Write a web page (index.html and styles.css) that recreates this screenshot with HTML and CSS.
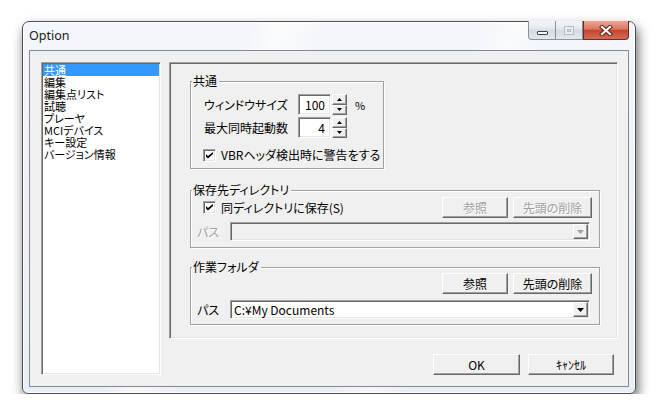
FILE: index.html
```html
<!DOCTYPE html>
<html lang="ja">
<head>
    <meta charset="UTF-8">
    <title>Option</title>
    <link rel="stylesheet" href="styles.css">
</head>
<body>
    <div class="window">
        <div class="titlebar">
            <span class="title">Option</span>
            <div class="caps">
                <span class="cap cap-min"><i></i></span>
                <span class="cap cap-max"><i></i></span>
                <span class="cap cap-close">
                    <svg width="14" height="11" viewBox="0 0 14 11">
                        <path d="M3 2 L11 9 M11 2 L3 9" stroke="#5a2218" stroke-width="4.2" stroke-linecap="square"/>
                        <path d="M3 2 L11 9 M11 2 L3 9" stroke="#fff" stroke-width="2.2" stroke-linecap="square"/>
                    </svg>
                </span>
            </div>
        </div>

        <div class="client">
            <ul class="listbox">
                <li class="selected">共通</li>
                <li>編集</li>
                <li>編集点リスト</li>
                <li>試聴</li>
                <li>プレーヤ</li>
                <li>MCIデバイス</li>
                <li>キー設定</li>
                <li>バージョン情報</li>
            </ul>

            <div class="main">
                <div class="panel">
                    <!-- 共通 -->
                    <div class="group group-common">
                        <span class="group-label">共通</span>
                        <div class="spin-row">
                            <span class="spin-label">ウィンドウサイズ</span>
                            <span class="edit">100</span>
                            <span class="spin">
                                <span class="spin-btn"><svg width="5" height="3" viewBox="0 0 5 3"><polygon points="0,3 2.5,0 5,3" fill="#000"/></svg></span>
                                <span class="spin-btn"><svg width="5" height="3" viewBox="0 0 5 3"><polygon points="0,0 5,0 2.5,3" fill="#000"/></svg></span>
                            </span>
                            <span class="unit">%</span>
                        </div>
                        <div class="spin-row">
                            <span class="spin-label">最大同時起動数</span>
                            <span class="edit">4</span>
                            <span class="spin">
                                <span class="spin-btn"><svg width="5" height="3" viewBox="0 0 5 3"><polygon points="0,3 2.5,0 5,3" fill="#000"/></svg></span>
                                <span class="spin-btn"><svg width="5" height="3" viewBox="0 0 5 3"><polygon points="0,0 5,0 2.5,3" fill="#000"/></svg></span>
                            </span>
                        </div>
                        <label class="check-row check-vbr">
                            <span class="checkbox"><svg width="7" height="7" viewBox="0 0 7 7"><path d="M0 2 L2 4 L7 0 L7 2 L2 6.5 L0 4.5 Z" fill="#000"/></svg></span>
                            VBRヘッダ検出時に警告をする
                        </label>
                    </div>

                    <!-- 保存先ディレクトリ -->
                    <div class="group group-save">
                        <span class="group-label">保存先ディレクトリ</span>
                        <div class="top-row">
                            <label class="check-row">
                                <span class="checkbox"><svg width="7" height="7" viewBox="0 0 7 7"><path d="M0 2 L2 4 L7 0 L7 2 L2 6.5 L0 4.5 Z" fill="#000"/></svg></span>
                                同ディレクトリに保存(S)
                            </label>
                            <div class="btn-pair">
                                <button class="btn btn-ref" disabled>参照</button>
                                <button class="btn btn-del" disabled>先頭の削除</button>
                            </div>
                        </div>
                        <div class="path-row">
                            <span class="path-label disabled">パス</span>
                            <span class="combo combo-disabled">
                                <span class="combo-text"></span>
                                <span class="combo-arrow"><svg width="7" height="4" viewBox="0 0 7 4"><polygon points="0,0 7,0 3.5,4" fill="#a0a0a0"/></svg></span>
                            </span>
                        </div>
                    </div>

                    <!-- 作業フォルダ -->
                    <div class="group group-work">
                        <span class="group-label">作業フォルダ</span>
                        <div class="top-row top-row-end">
                            <div class="btn-pair">
                                <button class="btn btn-ref">参照</button>
                                <button class="btn btn-del">先頭の削除</button>
                            </div>
                        </div>
                        <div class="path-row path-row-work">
                            <span class="path-label">パス</span>
                            <span class="combo">
                                <span class="combo-text">C:¥My Documents</span>
                                <span class="combo-arrow"><svg width="7" height="4" viewBox="0 0 7 4"><polygon points="0,0 7,0 3.5,4" fill="#000"/></svg></span>
                            </span>
                        </div>
                    </div>
                </div>

                <div class="footer">
                    <button class="btn btn-ok">OK</button>
                    <button class="btn btn-cancel">ｷｬﾝｾﾙ</button>
                </div>
            </div>
        </div>
    </div>
</body>
</html>
```

FILE: styles.css
```css
* {
    margin: 0;
    padding: 0;
    box-sizing: border-box;
}

body {
    background: #fff;
    font-family: "Noto Sans CJK JP", sans-serif;
    font-size: 12px;
    font-feature-settings: "palt";
    color: #000;
}

.window {
    width: 614px;
    height: 373px;
    margin: 21px 0 0 22px;
    padding: 0 6px 6px;
    display: flex;
    flex-direction: column;
    border: 1px solid #4b4f55;
    border-radius: 7px 7px 6px 6px;
    background:
        linear-gradient(112deg, rgba(255,255,255,0) 30%, rgba(255,255,255,0.6) 34%, rgba(255,255,255,0) 40%, rgba(255,255,255,0) 60%, rgba(255,255,255,0.5) 65%, rgba(255,255,255,0) 70%),
        linear-gradient(180deg, #f3f6fa 0%, #e9eef5 100%);
    box-shadow: inset 0 0 0 1px rgba(255,255,255,0.85), 2px 6px 12px rgba(0,0,0,0.6);
}

/* title bar */
.titlebar {
    height: 28px;
    display: flex;
    justify-content: space-between;
    align-items: flex-start;
}

.title {
    font-family: "Noto Sans", sans-serif;
    font-feature-settings: normal;
    font-size: 12.5px;
    line-height: 14px;
    margin-top: 7px;
    color: #1b1b1b;
}

.caps {
    display: flex;
    height: 19px;
    margin-top: -1px;
}

.cap {
    height: 19px;
    display: flex;
    justify-content: center;
    align-items: center;
    border: 1px solid #8a9099;
    border-top: none;
    background: linear-gradient(#f4f6f9 0%, #e3e7ec 45%, #d4d9e0 50%, #e4e8ed 100%);
}

.cap-min {
    width: 27px;
    border-right: none;
    border-radius: 0 0 0 4px;
}

.cap-min i {
    display: block;
    width: 11px;
    height: 4px;
    margin-top: 5px;
    border: 1px solid #3c424c;
    border-radius: 1px;
    background: #fff;
}

.cap-max {
    width: 28px;
}

.cap-max i {
    display: block;
    width: 10px;
    height: 9px;
    border: 1px solid #b9bdc3;
    box-shadow: inset 0 0 0 2px #e8ebef, inset 0 0 0 3px #b9bdc3;
}

.cap-close {
    width: 46px;
    border-color: #6e2a1f;
    border-radius: 0 0 4px 0;
    background: linear-gradient(#eba696 0%, #d87966 45%, #c6452d 52%, #d56c55 100%);
}

/* client area */
.client {
    flex: 1;
    display: flex;
    gap: 8px;
    padding: 11px 10px 11px 11px;
    border: 1px solid #868a90;
    background: #f0f0f0;
}

.listbox {
    width: 120px;
    list-style: none;
    padding: 1px;
    background: #fff;
    border: 1px solid;
    border-color: #a0a0a0 #fff #fff #a0a0a0;
    box-shadow: inset 1px 1px 0 #696969, inset -1px -1px 0 #e3e3e3;
}

.listbox li {
    height: 12px;
    line-height: 12px;
    font-size: 11px;
    padding-left: 1px;
    white-space: nowrap;
}

.listbox li.selected {
    background: #3399ff;
    color: #fff;
}

.main {
    flex: 1;
    display: flex;
    flex-direction: column;
}

.panel {
    height: 277px;
    padding: 18px 0 0 20px;
    border: 1px solid;
    border-color: #a0a0a0 #fff #fff #a0a0a0;
    box-shadow: inset 1px 1px 0 #696969, inset -1px -1px 0 #e3e3e3;
}

/* group boxes */
.group {
    position: relative;
    border: 1px solid #a0a0a0;
    box-shadow: inset 1px 1px 0 #fff, 1px 1px 0 #fff;
}

.group-label {
    position: absolute;
    top: -7px;
    left: 1px;
    padding: 0 2px 0 1px;
    line-height: 12px;
    background: #f0f0f0;
    white-space: nowrap;
}

.group-common {
    width: 194px;
    height: 88px;
    padding: 12px 0 0 13px;
}

.group-save {
    width: 410px;
    height: 58px;
    margin-top: 21px;
    padding: 6px 7px 0 6px;
}

.group-work {
    width: 410px;
    height: 58px;
    margin-top: 19px;
    padding: 5px 7px 0 6px;
}

.spin-row {
    display: flex;
    align-items: center;
    height: 21px;
}

.spin-row + .spin-row {
    margin-top: 2px;
}

.spin-label {
    width: 94px;
    line-height: 12px;
    white-space: nowrap;
}

.edit {
    width: 33px;
    height: 21px;
    padding-right: 5px;
    text-align: right;
    line-height: 19px;
    background: #fff;
    border: 1px solid;
    border-color: #a0a0a0 #fff #fff #a0a0a0;
    box-shadow: inset 1px 1px 0 #696969, inset -1px -1px 0 #e3e3e3;
}

.spin {
    width: 15px;
    height: 21px;
    margin-left: 1px;
    display: flex;
    flex-direction: column;
}

.spin-btn {
    flex: 1;
    display: flex;
    justify-content: center;
    align-items: center;
    background: #f0f0f0;
    border: 1px solid;
    border-color: #fff #696969 #696969 #fff;
    box-shadow: inset -1px -1px 0 #a0a0a0;
}

.unit {
    margin-left: 8px;
    font-size: 11px;
    line-height: 12px;
}

.check-row {
    display: flex;
    align-items: center;
    gap: 5px;
    height: 14px;
    line-height: 12px;
    white-space: nowrap;
}

.check-vbr {
    margin: 10px 0 0 -1px;
}

.checkbox {
    width: 13px;
    height: 13px;
    display: flex;
    justify-content: center;
    align-items: center;
    background: #fff;
    border: 1px solid;
    border-color: #a0a0a0 #fff #fff #a0a0a0;
    box-shadow: inset 1px 1px 0 #696969, inset -1px -1px 0 #e3e3e3;
}

.top-row {
    display: flex;
    justify-content: space-between;
    align-items: center;
    height: 21px;
}

.top-row .check-row {
    margin-left: 6px;
}

.top-row-end {
    justify-content: flex-end;
}

.btn-pair {
    display: flex;
    gap: 5px;
}

.btn {
    height: 21px;
    font: inherit;
    font-feature-settings: "palt";
    line-height: 12px;
    color: #000;
    background: #f0f0f0;
    border: 1px solid;
    border-color: #fff #696969 #696969 #fff;
    box-shadow: inset -1px -1px 0 #a0a0a0;
}

.btn:disabled {
    color: #a0a0a0;
    text-shadow: 1px 1px 0 #fff;
}

.btn-ref {
    width: 66px;
}

.btn-del {
    width: 79px;
}

.path-row {
    display: flex;
    align-items: center;
    margin-top: 4px;
    margin-right: 2px;
}

.path-row-work {
    margin-top: 6px;
}

.path-label {
    width: 33px;
    line-height: 12px;
}

.disabled {
    color: #a0a0a0;
    text-shadow: 1px 1px 0 #fff;
}

.combo {
    flex: 1;
    height: 19px;
    display: flex;
    align-items: center;
    justify-content: space-between;
    padding: 0 1px 0 3px;
    background: #fff;
    border: 1px solid;
    border-color: #a0a0a0 #fff #fff #a0a0a0;
    box-shadow: inset 1px 1px 0 #696969, inset -1px -1px 0 #e3e3e3;
}

.combo-disabled {
    background: #f0f0f0;
}

.combo-text {
    line-height: 12px;
    font-feature-settings: normal;
}

.combo-arrow {
    width: 15px;
    height: 15px;
    display: flex;
    justify-content: center;
    align-items: center;
    background: #f0f0f0;
    border: 1px solid;
    border-color: #fff #696969 #696969 #fff;
    box-shadow: inset -1px -1px 0 #a0a0a0;
}

/* OK / cancel */
.footer {
    display: flex;
    justify-content: flex-end;
    gap: 8px;
    margin-top: 15px;
    padding-right: 4px;
}

.btn-ok {
    width: 87px;
}

.btn-cancel {
    width: 86px;
}
```
